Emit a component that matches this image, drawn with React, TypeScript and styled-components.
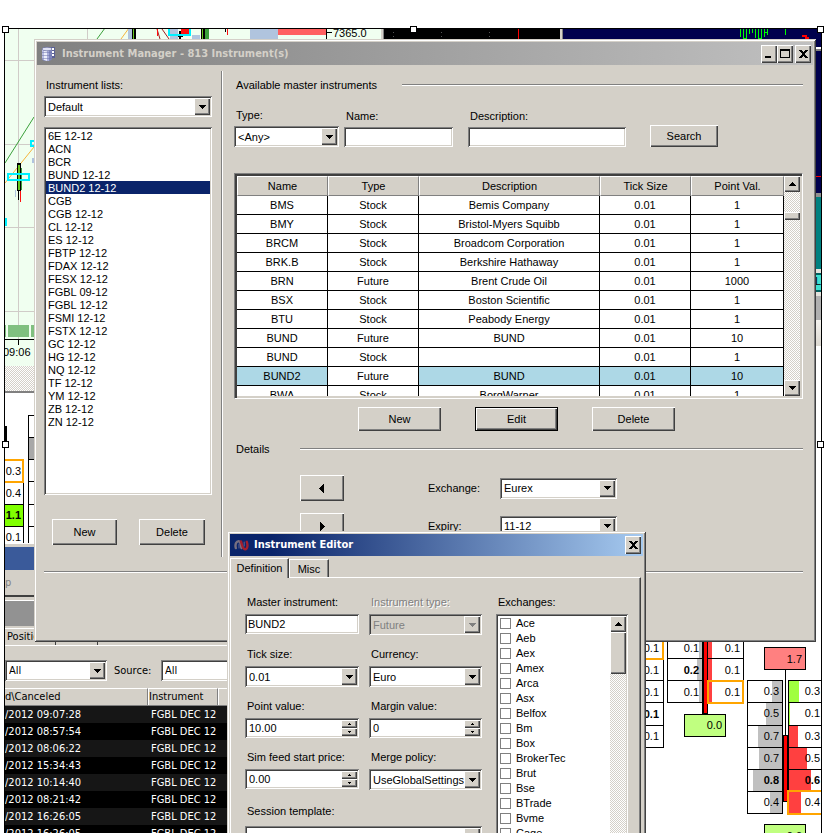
import React, { useState } from 'react';
import styled, { createGlobalStyle, css } from 'styled-components';

const face = '#d4d0c8';
const sans = '"Liberation Sans", Arial, sans-serif';
const tahoma = '"DejaVu Sans Condensed", "DejaVu Sans", Tahoma, sans-serif';

const raised = css`
  background: ${face};
  box-shadow: inset 1px 1px #fff, inset -1px -1px #404040, inset -2px -2px #808080;
`;
const sunken = css`
  box-shadow: inset 1px 1px #808080, inset -1px -1px #fff, inset 2px 2px #404040, inset -2px -2px ${face};
`;
const dither = css`
  background: repeating-conic-gradient(#fff 0% 25%, ${face} 0% 50%) 0 0 / 2px 2px;
`;

const GlobalStyle = createGlobalStyle`
  *, *::before, *::after { box-sizing: border-box; }
  body { margin: 0; background: #fff; font: 11px/12px ${sans}; color: #000; }
  button, input, select { font: inherit; color: inherit; border: 0; padding: 0; margin: 0; border-radius: 0; }
  ul { list-style: none; margin: 0; padding: 0; }
  svg { display: block; }
`;

/* ---------- desktop ---------- */

const Desktop = styled.main`
  position: relative;
  height: 100vh;
  overflow: hidden;
`;
const Backdrop = styled.div`
  position: absolute;
  inset: 28px 5px -8px 4px;
  border: 1px solid #000;
  display: flex;
  flex-direction: column;
  overflow: hidden;
`;
const ChartRow = styled.div`
  display: flex;
  height: 364px;
  flex: none;
`;
const PriceColumn = styled.div`
  width: 376px;
  flex: none;
  background: #f0fff0;
`;
const PriceFooter = styled.div`
  height: 27px;
  ${dither}
  border-bottom: 2px solid #808080;
`;
const Splitter = styled.div`
  width: 3px;
  flex: none;
  background: #808080;
  border-left: 2px solid ${face};
`;
const BlackPane = styled.div`
  width: 176px;
  flex: none;
  background: #000;
`;
const StackPane = styled.div`
  flex: 1;
  display: flex;
  flex-direction: column;
`;
const Band = styled.div<{ $h: number; $bg: string; $edge?: string }>`
  height: ${p => p.$h}px;
  flex: none;
  background: ${p => p.$bg};
  text-align: right;
  ${p => p.$edge && `border-top: 2px solid ${p.$edge}; border-bottom: 2px solid ${p.$edge};`}
`;
const NavyBand = styled(Band)`
  display: flex;
  justify-content: space-between;
`;
const LowerRow = styled.div`
  display: flex;
  flex: 1;
`;
const LowerLeft = styled.div`
  width: 635px;
  flex: none;
`;
const FootprintArea = styled.div`
  flex: 1;
  display: flex;
  justify-content: flex-end;
  align-items: flex-start;
  padding-top: 248px;
`;
const ChartSvg = styled.svg`
  font: 11px ${sans};
  flex: none;
`;

const Handle = styled.i<{ $x: 'left' | 'middle' | 'right'; $y: number }>`
  position: absolute;
  width: 7px;
  height: 7px;
  border: 1px solid #000;
  background: #fff;
  top: ${p => p.$y}px;
  ${p => (p.$x === 'left' ? 'left: 2px;' : p.$x === 'right' ? 'right: 3px;' : 'left: calc(50% - 4px);')}
`;

/* ---------- windows ---------- */

const Window = styled.section`
  position: absolute;
  background: ${face};
  padding: 3px;
  box-shadow: inset 1px 1px ${face}, inset -1px -1px #404040, inset 2px 2px #fff, inset -2px -2px #808080;
`;
const ManagerWindow = styled(Window)`
  top: 39px;
  left: 34px;
  right: 11px;
`;
const EditorWindow = styled(Window)`
  top: 531px;
  left: 227px;
  width: 419px;
`;
const TitleBar = styled.header<{ $active?: boolean }>`
  display: flex;
  align-items: center;
  height: ${p => (p.$active ? 22 : 23)}px;
  padding: 0 2px 0 4px;
  background: ${p =>
    p.$active ? 'linear-gradient(90deg, #0a246a, #0a246a 10%, #a6caf0)' : 'linear-gradient(90deg, #808080, #c0c0c0)'};
  color: ${p => (p.$active ? '#fff' : face)};
`;
const Title = styled.h1`
  flex: 1;
  margin: 0 0 0 5px;
  font: bold 11px/16px ${tahoma};
`;
const CaptionButton = styled.button<{ $spaced?: boolean }>`
  ${raised}
  width: 16px;
  height: 18px;
  display: grid;
  place-items: center;
  margin-left: ${p => (p.$spaced ? 2 : 0)}px;
`;

/* ---------- controls ---------- */

const PushButton = styled.button<{ $w: number; $h: number; $default?: boolean }>`
  ${raised}
  width: ${p => p.$w}px;
  height: ${p => p.$h}px;
  display: grid;
  place-items: center;
  ${p => p.$default && 'border: 1px solid #000;'}
`;
const TextBox = styled.input`
  ${sunken}
  background: #fff;
  width: 100%;
  height: 20px;
  padding: 0 3px;
  outline: 0;
`;
const ComboFrame = styled.div<{ $disabled?: boolean }>`
  ${sunken}
  display: grid;
  grid-template-columns: minmax(0, 1fr);
  width: 100%;
  height: 21px;
  padding: 2px;
  background: ${p => (p.$disabled ? face : '#fff')};
  color: ${p => (p.$disabled ? '#808080' : '#000')};
`;
const ComboSelect = styled.select`
  grid-area: 1 / 1;
  appearance: none;
  background: transparent;
  padding: 0 16px 0 2px;
  min-width: 0;
  opacity: 1;
  outline: 0;
`;
const ComboArrow = styled.span`
  ${raised}
  grid-area: 1 / 1;
  justify-self: end;
  width: 16px;
  display: grid;
  place-items: center;
  pointer-events: none;
`;
const SpinFrame = styled.div`
  ${sunken}
  display: flex;
  height: 20px;
  padding: 2px;
  background: #fff;
`;
const SpinInput = styled.input`
  flex: 1;
  width: 0;
  min-width: 0;
  padding-left: 2px;
  background: transparent;
  outline: 0;
`;
const SpinButtons = styled.div`
  display: flex;
  flex-direction: column;
  width: 16px;
  flex: none;
`;
const SpinButton = styled.button`
  ${raised}
  flex: 1;
  display: grid;
  place-items: center;
`;
const ScrollTrack = styled.div`
  ${dither}
  display: flex;
  flex-direction: column;
  width: 16px;
  flex: none;
`;
const ScrollButton = styled.button`
  ${raised}
  height: 16px;
  display: grid;
  place-items: center;
`;
const ScrollThumb = styled.div<{ $h: number; $offset?: number }>`
  ${raised}
  height: ${p => p.$h}px;
  margin-top: ${p => p.$offset ?? 0}px;
`;
const Spacer = styled.div`
  flex: 1;
`;
const Label = styled.label<{ $disabled?: boolean; $indent?: boolean }>`
  display: block;
  line-height: 12px;
  padding-left: ${p => (p.$indent ? 2 : 0)}px;
  white-space: nowrap;
  ${p => p.$disabled && 'color: #808080; text-shadow: 1px 1px #fff;'}
`;
const Rule = styled.div`
  height: 2px;
  flex: 1;
  border-top: 1px solid #808080;
  border-bottom: 1px solid #fff;
`;

/* ---------- instrument manager ---------- */

const ManagerBody = styled.div`
  padding: 6px 10px 66px 7px;
`;
const ManagerColumns = styled.div`
  display: flex;
  margin-bottom: 14px;
`;
const ListColumn = styled.div`
  width: 168px;
  flex: none;
  padding: 8px 0 12px;
  display: flex;
  flex-direction: column;
`;
const VerticalRule = styled.div`
  width: 2px;
  margin: 0 11px 0 9px;
  border-left: 1px solid #808080;
  border-right: 1px solid #fff;
`;
const ListCombo = styled.div`
  margin: 5px 0 10px;
`;
const ListBox = styled.ul`
  ${sunken}
  height: 368px;
  padding: 2px;
  background: #fff;
`;
const ListItem = styled.li<{ $selected: boolean }>`
  height: 13px;
  padding-left: 2px;
  line-height: 14px;
  cursor: default;
  ${p => p.$selected && 'background: #0a246a; color: #fff;'}
`;
const ListButtons = styled.div`
  display: flex;
  gap: 22px;
  margin-top: 24px;
  padding-left: 8px;
`;
const MainColumn = styled.div`
  flex: 1;
  min-width: 0;
  padding-top: 8px;
`;
const SectionHead = styled.div<{ $label: number }>`
  display: flex;
  align-items: center;
  padding-left: 2px;
  h2 {
    margin: 0;
    width: ${p => p.$label}px;
    font: inherit;
  }
`;
const SearchRow = styled.div`
  display: flex;
  align-items: flex-end;
  margin: 18px 0 26px;
`;
const Field = styled.div<{ $w?: number; $after?: number; $gap?: number }>`
  ${p => p.$w && `width: ${p.$w}px;`}
  min-width: 0;
  display: grid;
  grid-template-columns: minmax(0, 1fr);
  gap: ${p => p.$gap ?? 5}px;
  align-content: start;
  margin-right: ${p => p.$after ?? 0}px;
`;
const GridFrame = styled.div`
  height: 226px;
  display: flex;
  border: 1px solid;
  border-color: #808080 #fff #fff #808080;
  padding: 2px;
  box-shadow: inset 2px 2px #404040;
`;
const GridViewport = styled.div`
  flex: 1;
  overflow: hidden;
`;
const Grid = styled.table`
  width: 100%;
  table-layout: fixed;
  border-collapse: separate;
  border-spacing: 0;
  text-align: center;
`;
const Th = styled.th`
  height: 20px;
  padding: 0;
  font-weight: normal;
  background: ${face};
  border: 1px solid;
  border-color: #fff #808080 #808080 #fff;
`;
const Td = styled.td<{ $hot?: boolean }>`
  height: 19px;
  padding: 0;
  background: ${p => (p.$hot ? '#add8e6' : '#fff')};
  border-right: 1px solid #000;
  border-bottom: 1px solid #000;
`;
const GridButtons = styled.div`
  display: flex;
  gap: 34px;
  margin: 8px 0 12px;
  padding-left: 124px;
`;
const DetailGrid = styled.div`
  display: grid;
  grid-template-columns: 128px 72px 117px;
  row-gap: 12px;
  align-items: center;
  margin-top: 20px;
  padding-left: 66px;
`;

/* ---------- instrument editor ---------- */

const Tabs = styled.div`
  display: flex;
  align-items: flex-end;
  height: 21px;
`;
const Tab = styled.button<{ $active?: boolean }>`
  width: ${p => (p.$active ? 59 : 40)}px;
  height: 18px;
  background: ${face};
  border-top: 1px solid #fff;
  border-left: 1px solid #fff;
  border-right: 1px solid #404040;
  box-shadow: inset -1px 0 #808080;
  ${p => p.$active && 'margin-bottom: -1px; height: 20px; padding-bottom: 2px;'}
`;
const TabPane = styled.div`
  display: flex;
  height: 400px;
  margin-right: 2px;
  padding: 18px 0 0 14px;
  border-top: 1px solid #fff;
  border-left: 1px solid #fff;
  border-right: 1px solid #404040;
  box-shadow: inset -1px 0 #808080;
`;
const EditorForm = styled.form`
  display: grid;
  grid-template-columns: 114px 113px;
  gap: 13px 10px;
  align-content: start;
  margin-right: 14px;
`;
const SessionField = styled.div`
  grid-column: 1 / 3;
  display: grid;
  gap: 9px;
  padding-top: 2px;
`;
const ExchangeFrame = styled.div`
  ${sunken}
  display: flex;
  width: 132px;
  height: 340px;
  padding: 2px;
  background: #fff;
`;
const ExchangeList = styled.ul`
  flex: 1;
  padding-left: 2px;
`;
const ExchangeItem = styled.li`
  height: 15px;
  label {
    display: flex;
    align-items: center;
    gap: 5px;
    line-height: 15px;
  }
  input {
    appearance: none;
    width: 11px;
    height: 11px;
    border: 1px solid #808080;
    background: #fff;
  }
  input:checked {
    background: #404040;
    box-shadow: inset 0 0 0 2px #fff;
  }
`;

/* ---------- orders panel ---------- */

const OrdersPanel = styled.section`
  background: ${face};
  width: 635px;
  padding-top: 3px;
  font: 11px/14px ${tahoma};
  border-top: 1px solid #fff;
`;
const OrdersCaption = styled.div`
  height: 23px;
  background: #3a5a9a;
`;
const OrdersMenu = styled.div`
  height: 27px;
  padding-top: 6px;
  color: #808080;
  border-bottom: 2px solid #404040;
`;
const OrdersSub = styled.div`
  height: 28px;
  margin-top: 3px;
  background: #929292;
  border-top: 1px solid #fff;
  border-bottom: 2px solid ${face};
  box-shadow: 0 1px #808080;
`;
const OrdersTabs = styled.div`
  display: flex;
  height: 18px;
  border-bottom: 1px solid #fff;
`;
const OrdersTab = styled.button<{ $w: number }>`
  width: ${p => p.$w}px;
  height: 17px;
  background: ${face};
  text-align: left;
  padding-left: 2px;
  border-top: 1px solid #fff;
  border-right: 1px solid #404040;
`;
const OrdersFilter = styled.div`
  display: flex;
  align-items: center;
  gap: 7px;
  padding: 14px 0 7px;
`;
const FilterCombo = styled.div<{ $w: number }>`
  width: ${p => p.$w}px;
`;
const FilterLabel = styled(Label)`
  width: 40px;
`;
const OrdersTable = styled.table`
  border-collapse: separate;
  border-spacing: 0;
  width: 100%;
  table-layout: fixed;
  th {
    height: 18px;
    padding: 0 0 0 1px;
    text-align: left;
    font-weight: normal;
    border-top: 1px solid #fff;
    border-right: 1px solid #808080;
    border-bottom: 1px solid #808080;
    box-shadow: inset 1px 0 #fff;
  }
  td {
    height: 17px;
    padding: 0 0 0 3px;
    color: #fff;
    background: #000;
  }
  td:first-child, th:first-child { padding-left: 0; box-shadow: none; }
  tr:nth-child(odd) td { background: #161616; }
`;

/* ---------- glyphs ---------- */

type Dir = 'up' | 'down' | 'left' | 'right';
const arrowPaths: Record<Dir, string> = {
  down: 'M0 2h7v1h-1v1h-1v1h-1v1h-1v-1h-1v-1h-1v-1h-1z',
  up: 'M0 6h7v-1h-1v-1h-1v-1h-1v-1h-1v1h-1v1h-1v1h-1z',
  left: 'M5 0v9h-1v-1h-1v-1h-1v-1h-1v-1h-1v-1h1v-1h1v-1h1v-1h1v-1z',
  right: 'M1 0v9h1v-1h1v-1h1v-1h1v-1h1v-1h-1v-1h-1v-1h-1v-1h-1v-1z',
};
const Arrow = ({ dir, color = '#000' }: { dir: Dir; color?: string }) => (
  <svg width="7" height={dir === 'up' || dir === 'down' ? 8 : 9} fill={color} shapeRendering="crispEdges" aria-hidden>
    <path d={arrowPaths[dir]} />
  </svg>
);
const TinyArrow = ({ up }: { up?: boolean }) => (
  <svg width="3" height="2" shapeRendering="crispEdges" aria-hidden>
    <path d={up ? 'M0 2h3v-1h-1v-1h-1v1h-1z' : 'M0 0h3v1h-1v1h-1v-1h-1z'} />
  </svg>
);
const CloseGlyph = () => (
  <svg width="9" height="8" shapeRendering="crispEdges" aria-hidden>
    <path d="M0 0h3v1h-3zM6 0h3v1h-3zM1 1h3v1h-3zM5 1h3v1h-3zM2 2h5v1h-5zM3 3h3v2h-3zM2 5h5v1h-5zM1 6h3v1h-3zM5 6h3v1h-3zM0 7h3v1h-3zM6 7h3v1h-3z" />
  </svg>
);
const MinGlyph = () => (
  <svg width="8" height="9" shapeRendering="crispEdges" aria-hidden>
    <path d="M0 7h6v2h-6z" />
  </svg>
);
const MaxGlyph = () => (
  <svg width="10" height="9" shapeRendering="crispEdges" aria-hidden>
    <path fillRule="evenodd" d="M0 0h10v9h-10zM1 2v6h8v-6z" />
  </svg>
);
const DatabaseIcon = () => (
  <svg width="16" height="16" viewBox="0 0 16 16" aria-hidden>
    <path d="M9 1h5v11H9z" fill="#5c6294" />
    <path d="M11 2h2v2h-2zM11 5h2v2h-2zM11 8h2v2h-2z" fill="#fff" />
    <path d="M1 3v10c0 1 2 2 4.500 2s5.500-1 5.500-2V3z" fill="#7f86bd" />
    <path d="M1 3h2v11l-2-1z" fill="#b9bde2" />
    <path d="M3 3h3v12l-3-1z" fill="#eceefb" />
    <path d="M6 3h2v12h-2z" fill="#a9aedb" />
    <path d="M1 6.500h10M1 9.500h10M1 12.500h10" stroke="#6a70a8" strokeWidth=".5" />
    <ellipse cx="6" cy="3" rx="5" ry="1.800" fill="#dfe1f4" stroke="#666c9e" strokeWidth=".7" />
  </svg>
);
const WaveIcon = () => (
  <svg width="15" height="16" viewBox="0 0 15 16" fill="none" strokeLinecap="round" aria-hidden>
    <path d="M1.800 11C.8 7 2.500 4 4.800 4.200S6.500 9 7.500 11" stroke="#776f80" strokeWidth="2.400" />
    <path d="M7 4.500c1 3 1.500 7.500 4 7.800S14 8 12.800 4.800" stroke="#a01f2e" strokeWidth="2.400" />
    <path d="M5 7v4M10.200 5v4" stroke="#53588c" strokeWidth="1.200" />
  </svg>
);

/* ---------- composite controls ---------- */

const Combo = ({ id, value, options = [], disabled, name }: {
  id?: string; value: string; options?: string[]; disabled?: boolean; name?: string;
}) => (
  <ComboFrame $disabled={disabled}>
    <ComboSelect id={id} defaultValue={value} disabled={disabled} aria-label={name}>
      {[value, ...options].map(o => <option key={o}>{o}</option>)}
    </ComboSelect>
    <ComboArrow><Arrow dir="down" color={disabled ? '#808080' : '#000'} /></ComboArrow>
  </ComboFrame>
);
const Spinner = ({ id, value }: { id: string; value: string }) => (
  <SpinFrame>
    <SpinInput id={id} defaultValue={value} />
    <SpinButtons>
      <SpinButton type="button" aria-label="Increase"><TinyArrow up /></SpinButton>
      <SpinButton type="button" aria-label="Decrease"><TinyArrow /></SpinButton>
    </SpinButtons>
  </SpinFrame>
);

/* ---------- charts ---------- */

const PriceChart = () => (
  <ChartSvg width="376" height="337" viewBox="5 29 376 337" shapeRendering="crispEdges" aria-hidden>
    <path d="M18.500 29v310M87.500 29v310M5 60.500h376M5 144.500h376M5 227.500h376M5 311.500h376" stroke="#d0ccc8" />
    <g shapeRendering="auto" fill="none">
      <path d="M5 163L34 117M97 39L105 28" stroke="#3aa03a" />
      <path d="M5 183L34 147M121 39L129 28" stroke="#f5b53c" />
      <path d="M157 29l3 10M162 29l7 10" stroke="#a02020" />
    </g>
    <path d="M128 29h4v10h-4zM170 29h8v10h-8zM192 35h8v4h-8zM250 29h28v10h-28zM15 190h1v7h-1zM32 158h3v5h-3z" fill="#b0c4de" />
    <path d="M132 29h4v10h-4zM201 29h4v10h-4zM225 29h1v3h-1zM17 163h4v28h-4zM18 191h1v9h-1z" />
    <path d="M133 29h1v10h-1zM202 29h1v10h-1zM18 165h2v25h-2z" fill="#66c81e" />
    <path d="M205 29h4v10h-4zM21 168h1v22h-1z" fill="#3aa03a" />
    <path d="M181 29h8v7h-8zM227 29h1v6h-1zM20 191h1v11h-1zM157 29h1v7h-1z" fill="#ff1010" />
    <path d="M179 31h2v8h-2zM178 35h5v2h-5z" />
    <path d="M278 29h48v6h-48z" fill="#ff6060" />
    <path d="M326 29h1v10h-1zM326 32h6v1h-6z" />
    <path d="M169 28h21v7h-21zM8 174h21v6h-21zM31 141h8v5h-8zM0 219h6v6h-6z" fill="none" stroke="#00f0ff" strokeWidth="2" />
    <path d="M5 325h1v12h-1zM8 325h21v12h-21zM31 325h60v12h-60z" fill="#80c080" />
    <path d="M5 339h376v1h-376zM18 340h1v5h-1z" />
    <text x="333" y="37">7365.0</text>
    <text x="3" y="356">09:06</text>
  </ChartSvg>
);

const Signals = () => (
  <ChartSvg width="92" height="150" viewBox="729 29 92 150" shapeRendering="crispEdges" aria-hidden>
    <path d="M740.500 29v8M743.500 29v10M746.500 29v10M743 38.500h4M749.500 29v5M752.500 29v4M755.500 29v9M758.500 29v10M761.500 29v10M758 38.500h4M764.500 29v8M764 32.500h4M767.500 29v6M785.500 29v6" stroke="#00ff00" />
    <path d="M802 35h5v2h-5zM805 37h4v2h-4zM816 176h5v1h-5z" fill="#f00" />
    <path d="M815 47h6v2h-6z" fill="#fff" />
    <path d="M815 49h6v2h-6z" fill="#808080" />
  </ChartSvg>
);

const SideLadder = () => (
  <ChartSvg width="32" height="150" viewBox="5 393 32 150" shapeRendering="crispEdges" aria-hidden>
    <path d="M28 437h9v22h-9z" fill="#a8a8a8" />
    <path d="M5 504h18v22h-18z" fill="#80ff00" />
    <path d="M5 426h1v20h-1zM23.500 482v61M28.500 543v-128h9M28 437.500h9M28 459.500h9M28 481.500h9M28 504.500h9M28 526.500h9M5 504.500h19M5 526.500h19" stroke="#000" fill="none" />
    <path d="M0 460h23v22h-23z" fill="none" stroke="#ffa500" strokeWidth="2" />
    <g textAnchor="end">
      <text x="21" y="475">0.3</text>
      <text x="21" y="497">0.4</text>
      <text x="21" y="519" fontWeight="bold">1.1</text>
      <text x="21" y="541">0.1</text>
    </g>
  </ChartSvg>
);

const bidCells = [
  { y: 681, h: 22, bar: 772, bid: '0.3', ask: '0.3', end: 799, color: '#a0ff40' },
  { y: 703, h: 23, bar: 766, bid: '0.5', ask: '0.1', end: 790, color: '#a0ff40' },
  { y: 726, h: 22, bar: 758, bid: '0.7', ask: '0.3', end: 798, color: '#ff4040' },
  { y: 748, h: 22, bar: 759, bid: '0.7', ask: '0.5', end: 807, color: '#ff4040' },
  { y: 770, h: 22, bar: 753, bid: '0.8', ask: '0.6', end: 811, color: '#ff4040', bold: true },
  { y: 792, h: 22, bar: 770, bid: '0.4', ask: '0.4', end: 801, color: '#ff4040' },
];

const Footprint = () => (
  <ChartSvg width="181" height="200" viewBox="640 641 181 200" shapeRendering="crispEdges" aria-hidden>
    <path d="M699 641h3v61h-3zM697 659h5v21h-5z" fill="#c0c0c0" />
    <path d="M708 641h4v61h-4z" fill="#ff4040" />
    <g fill="none" stroke="#000">
      <path d="M640 680.500h23.500M640 702.500h23.500M640 725.500h23.500M640 747.500h23.500v-89" />
      <path d="M667.500 641v61.500h35M667 658.500h76M667 680.500h76M743.500 641v40" />
      <path d="M684.500 714.500h41v22h-41z" fill="#c0ff80" />
      <path d="M764.500 647.500h41v22h-41z" fill="#ff8080" />
      <path d="M764.500 824.500h41v22h-41z" fill="#c0ff80" />
      <path d="M785.500 669v66" />
    </g>
    <path d="M702 641h6v73h-6z" />
    <path d="M704 641h3v72h-3z" fill="#f00" />
    <path d="M630 637h33v22h-33zM708 681h35v22h-35z" fill="none" stroke="#ffa500" strokeWidth="2" />
    <g textAnchor="end">
      {['0.1', '0.1', '0.1', '0.1', '0.1'].map((t, i) => (
        <text key={i} x="659" y={652 + i * 22} fontWeight={i === 3 ? 'bold' : undefined}>{t}</text>
      ))}
      {['0.1', '0.2', '0.1'].map((t, i) => (
        <text key={i} x="699" y={652 + i * 22} fontWeight={i === 1 ? 'bold' : undefined}>{t}</text>
      ))}
      {['0.1', '0.1', '0.1'].map((t, i) => <text key={i} x="740" y={652 + i * 22}>{t}</text>)}
      <text x="722" y="729">0.0</text>
      <text x="802" y="663">1.7</text>
      <text x="802" y="840">0.0</text>
    </g>
    {bidCells.map((c, i) => (
      <g key={i} textAnchor="end" fontWeight={c.bold ? 'bold' : undefined}>
        <rect x={c.bar} y={c.y} width={782 - c.bar} height={c.h} fill="#c0c0c0" />
        <rect x="789" y={c.y} width={c.end - 789} height={c.h} fill={c.color} />
        <rect x="747.500" y={c.y - 0.5} width="35" height={c.h} fill="none" stroke="#000" />
        <rect x="788.500" y={c.y - 0.5} width="40" height={c.h} fill="none" stroke="#000" />
        <text x="779" y={c.y + 14}>{c.bid}</text>
        <text x="820" y={c.y + 14}>{c.ask}</text>
      </g>
    ))}
    <path d="M783 735h6v67h-6z" />
    <path d="M784 736h3v65h-3z" fill="#f00" />
    <path d="M788 791h40v23h-40z" fill="none" stroke="#ffa500" strokeWidth="2" />
  </ChartSvg>
);

/* ---------- data ---------- */

const lists = ['6E 12-12', 'ACN', 'BCR', 'BUND 12-12', 'BUND2 12-12', 'CGB', 'CGB 12-12', 'CL 12-12', 'ES 12-12',
  'FBTP 12-12', 'FDAX 12-12', 'FESX 12-12', 'FGBL 09-12', 'FGBL 12-12', 'FSMI 12-12', 'FSTX 12-12', 'GC 12-12',
  'HG 12-12', 'NQ 12-12', 'TF 12-12', 'YM 12-12', 'ZB 12-12', 'ZN 12-12'];

const instruments = [
  ['BMS', 'Stock', 'Bemis Company', '0.01', '1'],
  ['BMY', 'Stock', 'Bristol-Myers Squibb', '0.01', '1'],
  ['BRCM', 'Stock', 'Broadcom Corporation', '0.01', '1'],
  ['BRK.B', 'Stock', 'Berkshire Hathaway', '0.01', '1'],
  ['BRN', 'Future', 'Brent Crude Oil', '0.01', '1000'],
  ['BSX', 'Stock', 'Boston Scientific', '0.01', '1'],
  ['BTU', 'Stock', 'Peabody Energy', '0.01', '1'],
  ['BUND', 'Future', 'BUND', '0.01', '10'],
  ['BUND', 'Stock', '', '0.01', '1'],
  ['BUND2', 'Future', 'BUND', '0.01', '10'],
  ['BWA', 'Stock', 'BorgWarner', '0.01', '1'],
];

const exchanges = ['Ace', 'Aeb', 'Aex', 'Amex', 'Arca', 'Asx', 'Belfox', 'Bm', 'Box', 'BrokerTec', 'Brut', 'Bse',
  'BTrade', 'Bvme', 'Cage'];

const orderTimes = ['09:07:28', '08:57:54', '08:06:22', '15:34:43', '10:14:40', '08:21:42', '16:26:05', '16:26:05'];

/* ---------- page ---------- */

const Orders = () => (
  <OrdersPanel>
    <OrdersCaption />
    <OrdersMenu>p</OrdersMenu>
    <OrdersSub />
    <OrdersTabs>
      <OrdersTab $w={51}>Positions</OrdersTab>
      <OrdersTab $w={42}>Log</OrdersTab>
    </OrdersTabs>
    <OrdersFilter>
      <FilterCombo $w={102}><Combo value="All" name="Account" /></FilterCombo>
      <FilterLabel htmlFor="source">Source:</FilterLabel>
      <FilterCombo $w={102}><Combo id="source" value="All" /></FilterCombo>
    </OrdersFilter>
    <OrdersTable>
      <colgroup><col width="143" /><col width="70" /><col /></colgroup>
      <thead><tr><th>d\Canceled</th><th>Instrument</th><th /></tr></thead>
      <tbody>
        {orderTimes.map((t, i) => <tr key={i}><td>/2012 {t}</td><td>FGBL DEC 12</td><td /></tr>)}
      </tbody>
    </OrdersTable>
  </OrdersPanel>
);

const Manager = () => {
  const [selected, setSelected] = useState('BUND2 12-12');
  return (
    <ManagerWindow>
      <TitleBar>
        <DatabaseIcon />
        <Title>Instrument Manager - 813 Instrument(s)</Title>
        <CaptionButton aria-label="Minimize"><MinGlyph /></CaptionButton>
        <CaptionButton aria-label="Maximize"><MaxGlyph /></CaptionButton>
        <CaptionButton aria-label="Close" $spaced><CloseGlyph /></CaptionButton>
      </TitleBar>
      <ManagerBody>
        <ManagerColumns>
          <ListColumn>
            <Label htmlFor="lists" $indent>Instrument lists:</Label>
            <ListCombo><Combo id="lists" value="Default" /></ListCombo>
            <ListBox role="listbox" aria-label="Instruments">
              {lists.map(l => (
                <ListItem key={l} role="option" aria-selected={l === selected} $selected={l === selected} onClick={() => setSelected(l)}>
                  {l}
                </ListItem>
              ))}
            </ListBox>
            <ListButtons>
              <PushButton $w={65} $h={26}>New</PushButton>
              <PushButton $w={66} $h={26}>Delete</PushButton>
            </ListButtons>
          </ListColumn>
          <VerticalRule />
          <MainColumn>
            <SectionHead $label={166}><h2>Available master instruments</h2><Rule /></SectionHead>
            <SearchRow>
              <Field $w={105} $after={5}>
                <Label htmlFor="type" $indent>Type:</Label>
                <Combo id="type" value="<Any>" options={['Future', 'Stock']} />
              </Field>
              <Field $w={109} $after={15}>
                <Label htmlFor="name" $indent>Name:</Label>
                <TextBox id="name" />
              </Field>
              <Field $w={158} $after={24}>
                <Label htmlFor="desc" $indent>Description:</Label>
                <TextBox id="desc" />
              </Field>
              <PushButton $w={68} $h={22}>Search</PushButton>
            </SearchRow>
            <GridFrame>
              <GridViewport>
                <Grid>
                  <colgroup><col width="91" /><col width="91" /><col /><col width="91" /><col width="93" /></colgroup>
                  <thead>
                    <tr>{['Name', 'Type', 'Description', 'Tick Size', 'Point Val.'].map(h => <Th key={h}>{h}</Th>)}</tr>
                  </thead>
                  <tbody>
                    {instruments.map((row, r) => (
                      <tr key={r}>
                        {row.map((v, c) => <Td key={c} $hot={row[0] === 'BUND2' && c !== 1}>{v}</Td>)}
                      </tr>
                    ))}
                  </tbody>
                </Grid>
              </GridViewport>
              <ScrollTrack>
                <ScrollButton aria-label="Scroll up"><Arrow dir="up" /></ScrollButton>
                <ScrollThumb $h={8} $offset={20} />
                <Spacer />
                <ScrollButton aria-label="Scroll down"><Arrow dir="down" /></ScrollButton>
              </ScrollTrack>
            </GridFrame>
            <GridButtons>
              <PushButton $w={83} $h={24}>New</PushButton>
              <PushButton $w={83} $h={24} $default>Edit</PushButton>
              <PushButton $w={83} $h={24}>Delete</PushButton>
            </GridButtons>
            <SectionHead $label={64}><h2>Details</h2><Rule /></SectionHead>
            <DetailGrid>
              <PushButton $w={44} $h={26} aria-label="Previous"><Arrow dir="left" /></PushButton>
              <Label htmlFor="exchange">Exchange:</Label>
              <Combo id="exchange" value="Eurex" />
              <PushButton $w={44} $h={26} aria-label="Next"><Arrow dir="right" /></PushButton>
              <Label htmlFor="expiry">Expiry:</Label>
              <Combo id="expiry" value="11-12" />
            </DetailGrid>
          </MainColumn>
        </ManagerColumns>
        <Rule />
      </ManagerBody>
    </ManagerWindow>
  );
};

const Editor = () => (
  <EditorWindow>
    <TitleBar $active>
      <WaveIcon />
      <Title>Instrument Editor</Title>
      <CaptionButton aria-label="Close"><CloseGlyph /></CaptionButton>
    </TitleBar>
    <Tabs>
      <Tab $active>Definition</Tab>
      <Tab>Misc</Tab>
    </Tabs>
    <TabPane>
      <EditorForm>
        <Field $gap={6}>
          <Label htmlFor="master" $indent>Master instrument:</Label>
          <TextBox id="master" defaultValue="BUND2" />
        </Field>
        <Field $gap={6}>
          <Label htmlFor="itype" $indent $disabled>Instrument type:</Label>
          <Combo id="itype" value="Future" disabled />
        </Field>
        <Field $gap={6}>
          <Label htmlFor="tick" $indent>Tick size:</Label>
          <Combo id="tick" value="0.01" />
        </Field>
        <Field $gap={6}>
          <Label htmlFor="currency" $indent>Currency:</Label>
          <Combo id="currency" value="Euro" />
        </Field>
        <Field $gap={6}>
          <Label htmlFor="point" $indent>Point value:</Label>
          <Spinner id="point" value="10.00" />
        </Field>
        <Field $gap={6}>
          <Label htmlFor="margin" $indent>Margin value:</Label>
          <Spinner id="margin" value="0" />
        </Field>
        <Field $gap={6}>
          <Label htmlFor="sim" $indent>Sim feed start price:</Label>
          <Spinner id="sim" value="0.00" />
        </Field>
        <Field $gap={6}>
          <Label htmlFor="merge" $indent>Merge policy:</Label>
          <Combo id="merge" value="UseGlobalSettings" />
        </Field>
        <SessionField>
          <Label htmlFor="session" $indent>Session template:</Label>
          <Combo id="session" value="" />
        </SessionField>
      </EditorForm>
      <Field $gap={6}>
        <Label as="span" $indent>Exchanges:</Label>
        <ExchangeFrame>
          <ExchangeList>
            {exchanges.map(e => (
              <ExchangeItem key={e}><label><input type="checkbox" />{e}</label></ExchangeItem>
            ))}
          </ExchangeList>
          <ScrollTrack>
            <ScrollButton aria-label="Scroll up"><Arrow dir="up" /></ScrollButton>
            <ScrollThumb $h={42} />
          </ScrollTrack>
        </ExchangeFrame>
      </Field>
    </TabPane>
  </EditorWindow>
);

export default function App() {
  return (
    <Desktop>
      <GlobalStyle />
      <Backdrop>
        <ChartRow>
          <PriceColumn>
            <PriceChart />
            <PriceFooter />
          </PriceColumn>
          <Splitter />
          <BlackPane>
            <ChartSvg width="176" height="10" viewBox="384 29 176 10" shapeRendering="crispEdges" aria-hidden>
              <path d="M518 29h1v10h-1z" fill="#f00" />
              <path d="M393 32h1v1h-1zM441 32h1v1h-1zM489 32h1v1h-1zM393 36h1v1h-1zM441 36h1v1h-1zM489 36h1v1h-1z" fill="#555" />
            </ChartSvg>
          </BlackPane>
          <Splitter />
          <StackPane>
            <NavyBand $h={164} $bg="#00004d"><Spacer /><Signals /></NavyBand>
            <Band $h={4} $bg="#909090" />
            <Band $h={72} $bg="#008080" />
            <Band $h={4} $bg="#e4e2dc" />
            <Band $h={19} $bg="#40e0d0" $edge="#006060">L</Band>
            <Band $h={4} $bg="#e4e2dc" />
            <Band $h={24} $bg="#b0b0b0" />
            <Band $h={26} $bg="linear-gradient(#f4f2ee, #dcd8d0)" />
          </StackPane>
        </ChartRow>
        <LowerRow>
          <LowerLeft>
            <SideLadder />
            <Orders />
          </LowerLeft>
          <FootprintArea><Footprint /></FootprintArea>
        </LowerRow>
      </Backdrop>
      <Manager />
      <Editor />
      <Handle $x="left" $y={26} />
      <Handle $x="middle" $y={26} />
      <Handle $x="right" $y={26} />
      <Handle $x="left" $y={441} />
      <Handle $x="right" $y={441} />
    </Desktop>
  );
}
